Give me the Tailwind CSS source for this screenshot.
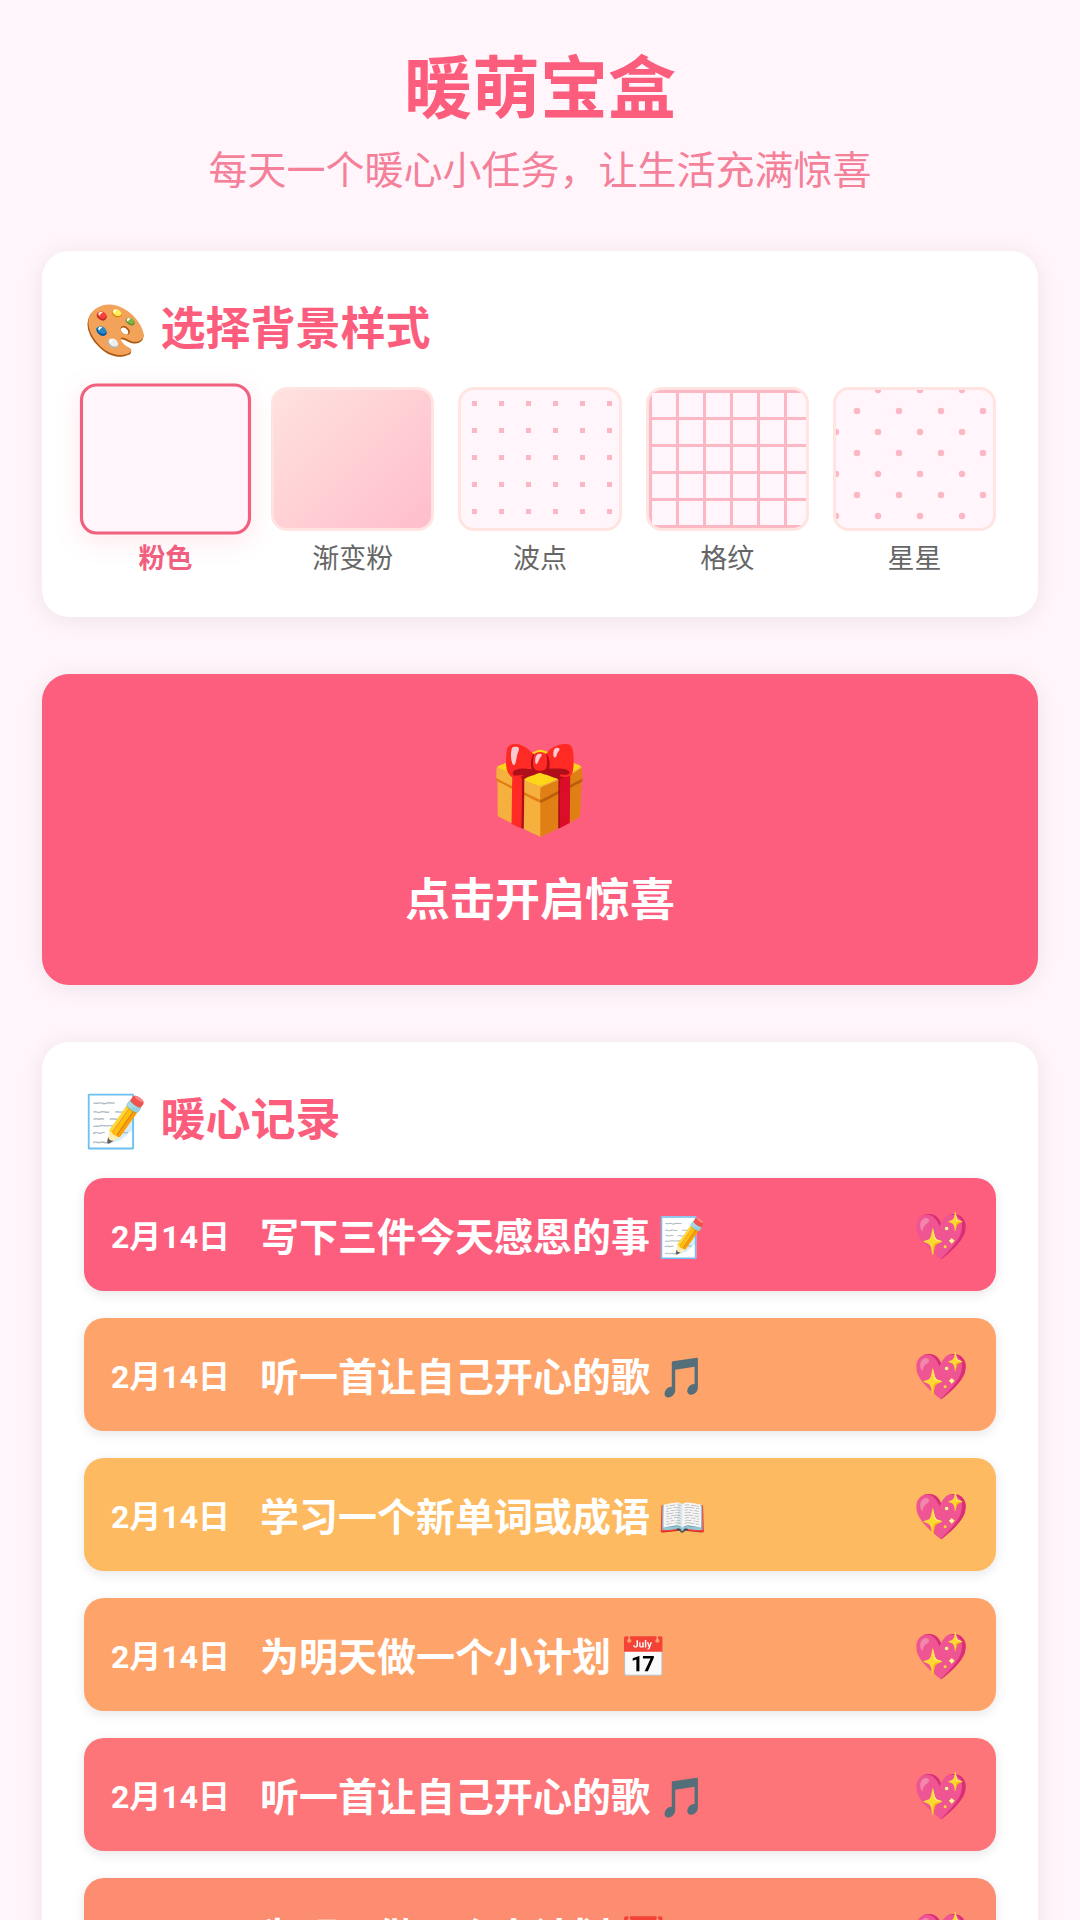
<!DOCTYPE html>
<html lang="zh-CN">
<head>
  <meta charset="UTF-8" />
  <meta name="viewport" content="width=device-width, initial-scale=1.0"/>
  <title>暖萌宝盒</title>
  <script src="https://cdn.jsdelivr.net/npm/@tailwindcss/browser@4"></script>
</head>
<body class="bg-[#fff5fb] min-h-screen px-[42px] py-[42px] font-['Noto_Sans_CJK_SC','Noto_Color_Emoji',sans-serif]">

  <header class="text-center mb-[57px]">
    <h1 class="text-[68px] leading-[84px] font-bold text-[#fc5d7d]">暖萌宝盒</h1>
    <p class="mt-[14px] text-[39px] leading-[54px] text-[#f2607f]/80">每天一个暖心小任务，让生活充满惊喜</p>
  </header>

  <main class="flex flex-col gap-[57px]">
    <!-- Background picker -->
    <section class="bg-white rounded-[27px] p-[42px] shadow-[0_3px_24px_rgba(0,0,0,0.08)]">
      <h2 class="flex items-center gap-[13px] h-[66px] mb-[28px] text-[45px] leading-[66px] font-bold text-[#fc5d7d]">
        <span class="text-[51px]">🎨</span>选择背景样式
      </h2>

      <div class="grid grid-cols-5 gap-6">
        <button type="button" aria-pressed="true" class="text-center">
          <span class="block h-36 rounded-2xl border-3 border-[#f0607f] bg-[#fff5fb] scale-105 shadow-[0_6px_24px_rgba(253,94,126,0.15)]"></span>
          <span class="block mt-2 text-[27px] leading-[36px] font-bold text-[#f0607f]">粉色</span>
        </button>
        <button type="button" aria-pressed="false" class="text-center">
          <span class="block h-36 rounded-2xl border-3 border-[#ffe4e1] bg-linear-135 from-[#ffe2df] to-[#ffbdcb]"></span>
          <span class="block mt-2 text-[27px] leading-[36px] text-[#666]">渐变粉</span>
        </button>
        <button type="button" aria-pressed="false" class="text-center">
          <span class="block h-36 rounded-2xl border-3 border-[#ffe4e1] bg-[#fff5fb] overflow-hidden">
            <svg class="w-full h-full">
              <defs>
                <pattern id="dots" width="27" height="27" patternUnits="userSpaceOnUse">
                  <rect x="11" y="11" width="5" height="5" fill="#fbb7c3"/>
                </pattern>
              </defs>
              <rect width="100%" height="100%" fill="url(#dots)"/>
            </svg>
          </span>
          <span class="block mt-2 text-[27px] leading-[36px] text-[#666]">波点</span>
        </button>
        <button type="button" aria-pressed="false" class="text-center">
          <span class="block h-36 rounded-2xl border-3 border-[#ffe4e1] bg-[#fff5fb] overflow-hidden">
            <svg class="w-full h-full">
              <defs>
                <pattern id="grid" width="27" height="27" patternUnits="userSpaceOnUse">
                  <path d="M0 0h27v3H3v24H0z" fill="#fbb7c3"/>
                </pattern>
              </defs>
              <rect width="100%" height="100%" fill="url(#grid)"/>
            </svg>
          </span>
          <span class="block mt-2 text-[27px] leading-[36px] text-[#666]">格纹</span>
        </button>
        <button type="button" aria-pressed="false" class="text-center">
          <span class="block h-36 rounded-2xl border-3 border-[#ffe4e1] bg-[#fff5fb] overflow-hidden">
            <svg class="w-full h-full">
              <defs>
                <pattern id="stars" width="42" height="42" patternUnits="userSpaceOnUse">
                  <g fill="#fbb7c3">
                    <circle cx="21" cy="21" r="3.2"/>
                    <circle cx="0" cy="0" r="3.2"/>
                    <circle cx="42" cy="0" r="3.2"/>
                    <circle cx="0" cy="42" r="3.2"/>
                    <circle cx="42" cy="42" r="3.2"/>
                  </g>
                </pattern>
              </defs>
              <rect width="100%" height="100%" fill="url(#stars)"/>
            </svg>
          </span>
          <span class="block mt-2 text-[27px] leading-[36px] text-[#666]">星星</span>
        </button>
      </div>
    </section>

    <!-- Surprise box -->
    <button type="button" class="w-full rounded-[27px] bg-[#fd5e7e] pt-[55px] pb-[54px] text-white shadow-[0_3px_24px_rgba(0,0,0,0.08)]">
      <span class="block text-[84px] leading-[108px]">🎁</span>
      <span class="block mt-[26px] text-[45px] leading-[68px] font-bold">点击开启惊喜</span>
    </button>

    <!-- Records -->
    <section class="bg-white rounded-[27px] p-[42px] shadow-[0_3px_24px_rgba(0,0,0,0.08)]">
      <h2 class="flex items-center gap-[13px] h-[66px] mb-[28px] text-[45px] leading-[66px] font-bold text-[#fc5d7d]">
        <span class="text-[51px]">📝</span>暖心记录
      </h2>

      <ul class="flex flex-col gap-[27px] text-white">
        <li class="flex items-center h-[113px] px-[27px] rounded-[20px] bg-[#fd5e7e] shadow-[0_3px_12px_rgba(0,0,0,0.1)]">
          <time class="w-[149px] pt-1 font-[Roboto,'Noto_Sans_CJK_SC',sans-serif] text-[32px] font-bold">2月14日</time>
          <span class="flex-1 text-[39px] font-bold">写下三件今天感恩的事 📝</span>
          <span class="pb-1 text-[45px]">💖</span>
        </li>
        <li class="flex items-center h-[113px] px-[27px] rounded-[20px] bg-[#fea36a] shadow-[0_3px_12px_rgba(0,0,0,0.1)]">
          <time class="w-[149px] pt-1 font-[Roboto,'Noto_Sans_CJK_SC',sans-serif] text-[32px] font-bold">2月14日</time>
          <span class="flex-1 text-[39px] font-bold">听一首让自己开心的歌 🎵</span>
          <span class="pb-1 text-[45px]">💖</span>
        </li>
        <li class="flex items-center h-[113px] px-[27px] rounded-[20px] bg-[#feba60] shadow-[0_3px_12px_rgba(0,0,0,0.1)]">
          <time class="w-[149px] pt-1 font-[Roboto,'Noto_Sans_CJK_SC',sans-serif] text-[32px] font-bold">2月14日</time>
          <span class="flex-1 text-[39px] font-bold">学习一个新单词或成语 📖</span>
          <span class="pb-1 text-[45px]">💖</span>
        </li>
        <li class="flex items-center h-[113px] px-[27px] rounded-[20px] bg-[#fea36a] shadow-[0_3px_12px_rgba(0,0,0,0.1)]">
          <time class="w-[149px] pt-1 font-[Roboto,'Noto_Sans_CJK_SC',sans-serif] text-[32px] font-bold">2月14日</time>
          <span class="flex-1 text-[39px] font-bold">为明天做一个小计划 📅</span>
          <span class="pb-1 text-[45px]">💖</span>
        </li>
        <li class="flex items-center h-[113px] px-[27px] rounded-[20px] bg-[#fd7578] shadow-[0_3px_12px_rgba(0,0,0,0.1)]">
          <time class="w-[149px] pt-1 font-[Roboto,'Noto_Sans_CJK_SC',sans-serif] text-[32px] font-bold">2月14日</time>
          <span class="flex-1 text-[39px] font-bold">听一首让自己开心的歌 🎵</span>
          <span class="pb-1 text-[45px]">💖</span>
        </li>
        <li class="flex items-center h-[113px] px-[27px] rounded-[20px] bg-[#fc8d71] shadow-[0_3px_12px_rgba(0,0,0,0.1)]">
          <time class="w-[149px] pt-1 font-[Roboto,'Noto_Sans_CJK_SC',sans-serif] text-[32px] font-bold">2月14日</time>
          <span class="flex-1 text-[39px] font-bold">为明天做一个小计划 📅</span>
          <span class="pb-1 text-[45px]">💖</span>
        </li>
      </ul>
    </section>
  </main>

</body>
</html>
